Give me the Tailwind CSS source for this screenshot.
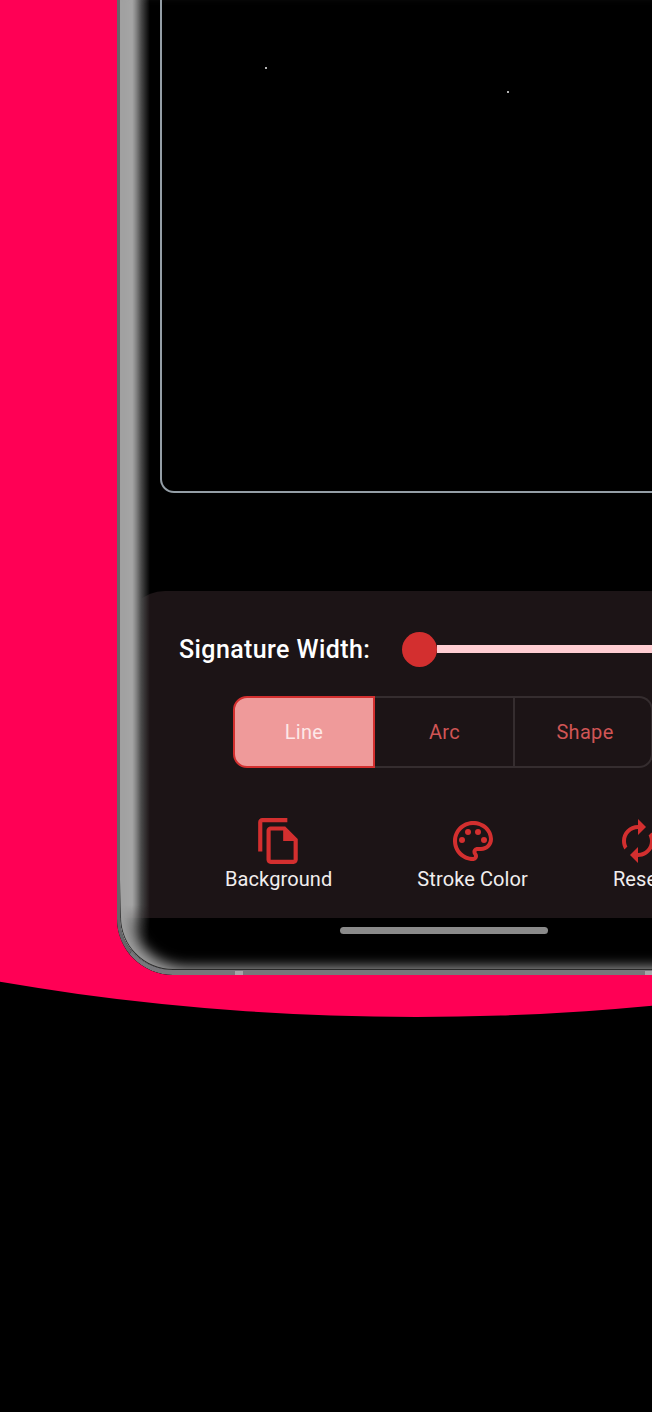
<!DOCTYPE html>
<html lang="en">
<head>
    <meta charset="UTF-8">
    <title>Signature Pad</title>
    <script src="https://cdn.jsdelivr.net/npm/@tailwindcss/browser@4"></script>
</head>
<body class="bg-black">
    <div class="relative w-[652px] h-[1412px] overflow-hidden bg-black font-['Roboto',sans-serif]">
        <!-- pink backdrop -->
        <div class="absolute left-[-1316px] top-[-1383px] w-[3464px] h-[2400px] rounded-[50%] bg-[#ff0055]"></div>

        <!-- phone -->
        <div class="relative ml-[117px] w-[640px] h-[975px] rounded-bl-[56px] overflow-hidden bg-black">
            <div class="ml-[43px] w-[600px] h-[493px] border-2 border-t-0 border-[#949ea6] rounded-bl-[14px] relative">
                <div class="absolute left-[103px] top-[67px] w-[2px] h-[2px] bg-white/70"></div>
                <div class="absolute left-[345px] top-[91px] w-[2px] h-[2px] bg-white/70"></div>
            </div>

            <div class="mt-[98px] ml-[8px] h-[327px] rounded-tl-[40px] bg-[#1c1416]">
                <div class="flex items-center pl-[54px] pt-[41px] h-[75px]">
                    <span class="w-[223px] pt-[2px] text-[25px] tracking-[0.4px] leading-[34px] font-medium text-white whitespace-nowrap">Signature Width:</span>
                    <div class="w-[35px] h-[35px] shrink-0 rounded-full bg-[#d32f2f]"></div>
                    <div class="flex-1 h-[8px] bg-[#ffcdd2]"></div>
                </div>
                <div class="flex ml-[108px] mt-[30px] h-[72px] text-[20px] tracking-[0.3px]">
                    <div class="w-[142px] flex items-center justify-center rounded-l-[14px] border-2 border-[#d32f2f] bg-[#ef9a9a] text-[#fde8e8]">Line</div>
                    <div class="w-[140px] flex items-center justify-center pl-[1px] border-y-2 border-r-2 border-[#352d2f] text-[#d05555]">Arc</div>
                    <div class="w-[138px] flex items-center justify-center pl-[4px] rounded-r-[14px] border-y-2 border-r-2 border-[#352d2f] text-[#d05555]">Shape</div>
                </div>
                <div class="flex gap-[85px] pl-[100px] mt-[49px] text-[20px] tracking-[0.1px] leading-[24px] text-[#f1eeee] whitespace-nowrap">
                    <div class="flex flex-col items-center">
                        <svg class="w-[50px] h-[50px] mt-[-1px] mb-[1px] fill-[#d32f2f]" viewBox="0 0 24 24"><path d="M16 1H4c-1.1 0-2 .9-2 2v14h2V3h12V1zm-1 4H8c-1.1 0-1.99.9-1.99 2L6 21c0 1.1.89 2 1.99 2H19c1.1 0 2-.9 2-2V11l-6-6zM8 21V7h6v5h5v9H8z"/></svg>
                        <span>Background</span>
                    </div>
                    <div class="flex flex-col items-center">
                        <svg class="w-[48px] h-[48px] mb-[2px] fill-[#d32f2f]" viewBox="0 0 24 24"><path d="M12 22C6.49 22 2 17.51 2 12S6.49 2 12 2s10 4.04 10 9c0 3.31-2.69 6-6 6h-1.77c-.28 0-.5.22-.5.5 0 .12.05.23.13.33.41.47.64 1.06.64 1.67 0 1.38-1.12 2.5-2.5 2.5zm0-18c-4.41 0-8 3.59-8 8s3.59 8 8 8c.28 0 .5-.22.5-.5 0-.16-.08-.28-.14-.35-.41-.46-.63-1.05-.63-1.65 0-1.38 1.12-2.5 2.5-2.5H16c2.21 0 4-1.79 4-4 0-3.86-3.59-7-8-7z"/><circle cx="6.5" cy="11.5" r="1.5"/><circle cx="9.5" cy="7.5" r="1.5"/><circle cx="14.5" cy="7.5" r="1.5"/><circle cx="17.5" cy="11.5" r="1.5"/></svg>
                        <span>Stroke Color</span>
                    </div>
                    <div class="flex flex-col items-center">
                        <svg class="w-[48px] h-[48px] mb-[2px] fill-[#d32f2f]" viewBox="0 0 24 24"><path d="M12 6v3l4-4-4-4v3c-4.42 0-8 3.58-8 8 0 1.57.46 3.03 1.24 4.26L6.7 14.8c-.45-.83-.7-1.79-.7-2.8 0-3.31 2.69-6 6-6zm6.76 1.74L17.3 9.2c.44.84.7 1.79.7 2.8 0 3.31-2.69 6-6 6v-3l-4 4 4 4v-3c4.42 0 8-3.58 8-8 0-1.57-.46-3.03-1.24-4.26z"/></svg>
                        <span>Reset</span>
                    </div>
                </div>
            </div>

            <!-- gesture bar -->
            <div class="ml-[223px] mt-[9px] w-[208px] h-[7px] rounded-full bg-[#8a8a8a]"></div>

            <!-- bezel lighting over the screen -->
            <div class="absolute inset-y-0 left-0 w-[34px] pointer-events-none bg-[linear-gradient(to_right,#555_0px,#a8a8a8_4px,#a8a8a8_15px,#4a4a4a_24px,transparent_33px)] [mask-image:linear-gradient(to_bottom,black_905px,transparent_950px)]"></div>
            <div class="absolute inset-0 rounded-bl-[56px] pointer-events-none border-l-[3px] border-b-[5px] border-l-[#666669] border-b-[#77777b] shadow-[inset_14px_-7px_13px_-4px_#a0a0a0]"></div>
            <div class="absolute left-[3px] right-0 top-0 bottom-[5px] rounded-bl-[53px] pointer-events-none border-l border-b border-[#2a2a2a] [mask-image:linear-gradient(to_bottom,transparent_880px,black_925px)]"></div>
            <div class="absolute left-[118px] bottom-0 w-[8px] h-[4px] bg-[#a5a5a8]"></div>
            <div class="absolute left-[528px] bottom-0 w-[8px] h-[4px] bg-[#a5a5a8]"></div>
        </div>
    </div>
</body>
</html>
